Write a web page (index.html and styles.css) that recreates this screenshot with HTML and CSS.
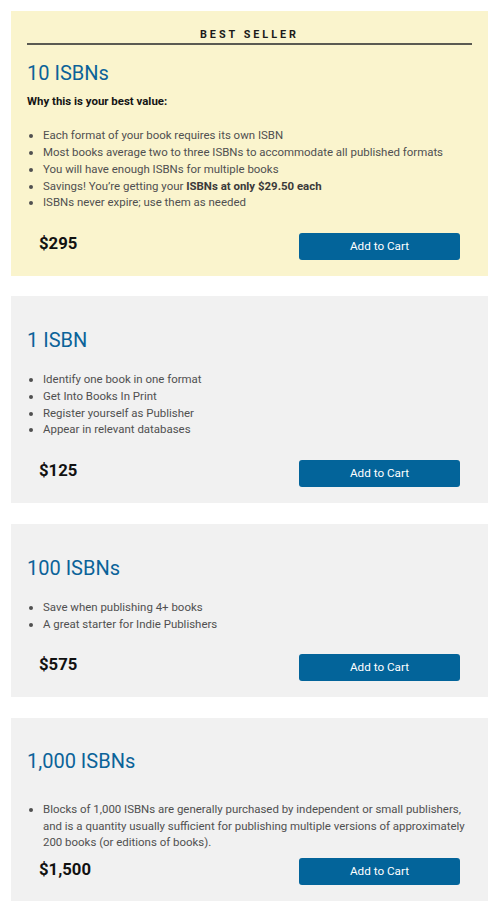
FILE: index.html
```html
<!DOCTYPE html>
<html lang="en">
<head>
<meta charset="utf-8">
<title>ISBN Packages</title>
<link rel="stylesheet" href="styles.css">
</head>
<body>
<main class="plans">
  <section class="card card--featured">
    <div class="card__badge">BEST SELLER</div>
    <h2 class="card__title card__title--featured">10 ISBNs</h2>
    <p class="card__intro">Why this is your best value:</p>
    <ul class="card__list">
      <li>Each format of your book requires its own ISBN</li>
      <li>Most books average two to three ISBNs to accommodate all published formats</li>
      <li>You will have enough ISBNs for multiple books</li>
      <li>Savings! You’re getting your <strong>ISBNs at only $29.50 each</strong></li>
      <li>ISBNs never expire; use them as needed</li>
    </ul>
    <div class="card__footer">
      <span class="card__price">$295</span>
      <button class="card__button" type="button">Add to Cart</button>
    </div>
  </section>

  <section class="card">
    <h2 class="card__title">1 ISBN</h2>
    <ul class="card__list">
      <li>Identify one book in one format</li>
      <li>Get Into Books In Print</li>
      <li>Register yourself as Publisher</li>
      <li>Appear in relevant databases</li>
    </ul>
    <div class="card__footer">
      <span class="card__price">$125</span>
      <button class="card__button" type="button">Add to Cart</button>
    </div>
  </section>

  <section class="card">
    <h2 class="card__title">100 ISBNs</h2>
    <ul class="card__list">
      <li>Save when publishing 4+ books</li>
      <li>A great starter for Indie Publishers</li>
    </ul>
    <div class="card__footer">
      <span class="card__price">$575</span>
      <button class="card__button" type="button">Add to Cart</button>
    </div>
  </section>

  <section class="card card--bulk">
    <h2 class="card__title">1,000 ISBNs</h2>
    <ul class="card__list">
      <li>Blocks of 1,000 ISBNs are generally purchased by independent or small publishers, and is a quantity usually sufficient for publishing multiple versions of approximately 200 books (or editions of books).</li>
    </ul>
    <div class="card__footer">
      <span class="card__price">$1,500</span>
      <button class="card__button" type="button">Add to Cart</button>
    </div>
  </section>
</main>
</body>
</html>
```

FILE: styles.css
```css
* {
  box-sizing: border-box;
}

html, body {
  margin: 0;
  padding: 0;
  background: #ffffff;
}

body {
  font-family: Roboto, "Liberation Sans", Arial, sans-serif;
  color: #505050;
}

.plans {
  display: flex;
  flex-direction: column;
  gap: 21px;
  width: 477px;
  margin: 11px 0 0 11px;
}

.card {
  background: #f1f1f1;
  padding: 32px 16px 16px;
}

.card--featured {
  background: #faf4cd;
  padding-top: 17px;
  margin-bottom: -1px;
}

.card__badge {
  font-size: 10.8px;
  line-height: 13px;
  font-weight: 700;
  letter-spacing: 3px;
  text-align: center;
  color: #1a1a1a;
  padding: 0 0 2px;
  border-bottom: 2px solid #5a5a52;
}

.card__title {
  margin: 0;
  font-size: 20px;
  line-height: 24px;
  font-weight: 400;
  color: #0b6399;
}

.card__title--featured {
  margin-top: 16px;
}

.card__intro {
  margin: 7.5px 0 0;
  font-size: 11.45px;
  line-height: 16.7px;
  font-weight: 700;
  color: #151515;
}

.card__list {
  margin: 19.4px 0 0;
  padding: 0 0 0 16px;
  font-size: 11.45px;
  line-height: 16.7px;
  color: #505050;
}

.card--featured .card__list {
  margin-top: 18.2px;
}

.card__list strong {
  font-weight: 700;
  color: #3a3a3a;
}

.card__footer {
  display: flex;
  justify-content: space-between;
  align-items: center;
  margin-top: 21.5px;
  padding: 0 12px;
}

.card--featured .card__footer {
  margin-top: 22px;
}

.card__price {
  font-size: 16.7px;
  line-height: 20px;
  font-weight: 700;
  color: #111111;
  padding-bottom: 4px;
}

.card__button {
  width: 161px;
  height: 27px;
  border: none;
  border-radius: 3px;
  background: #03649a;
  color: #ffffff;
  font-family: Roboto, "Liberation Sans", Arial, sans-serif;
  font-size: 11.7px;
  line-height: 27px;
  padding: 0;
  cursor: pointer;
}

.card--bulk {
  padding-top: 31px;
}

.card--bulk .card__list {
  margin-top: 28px;
}

.card--bulk .card__footer {
  margin-top: 7px;
}
```
